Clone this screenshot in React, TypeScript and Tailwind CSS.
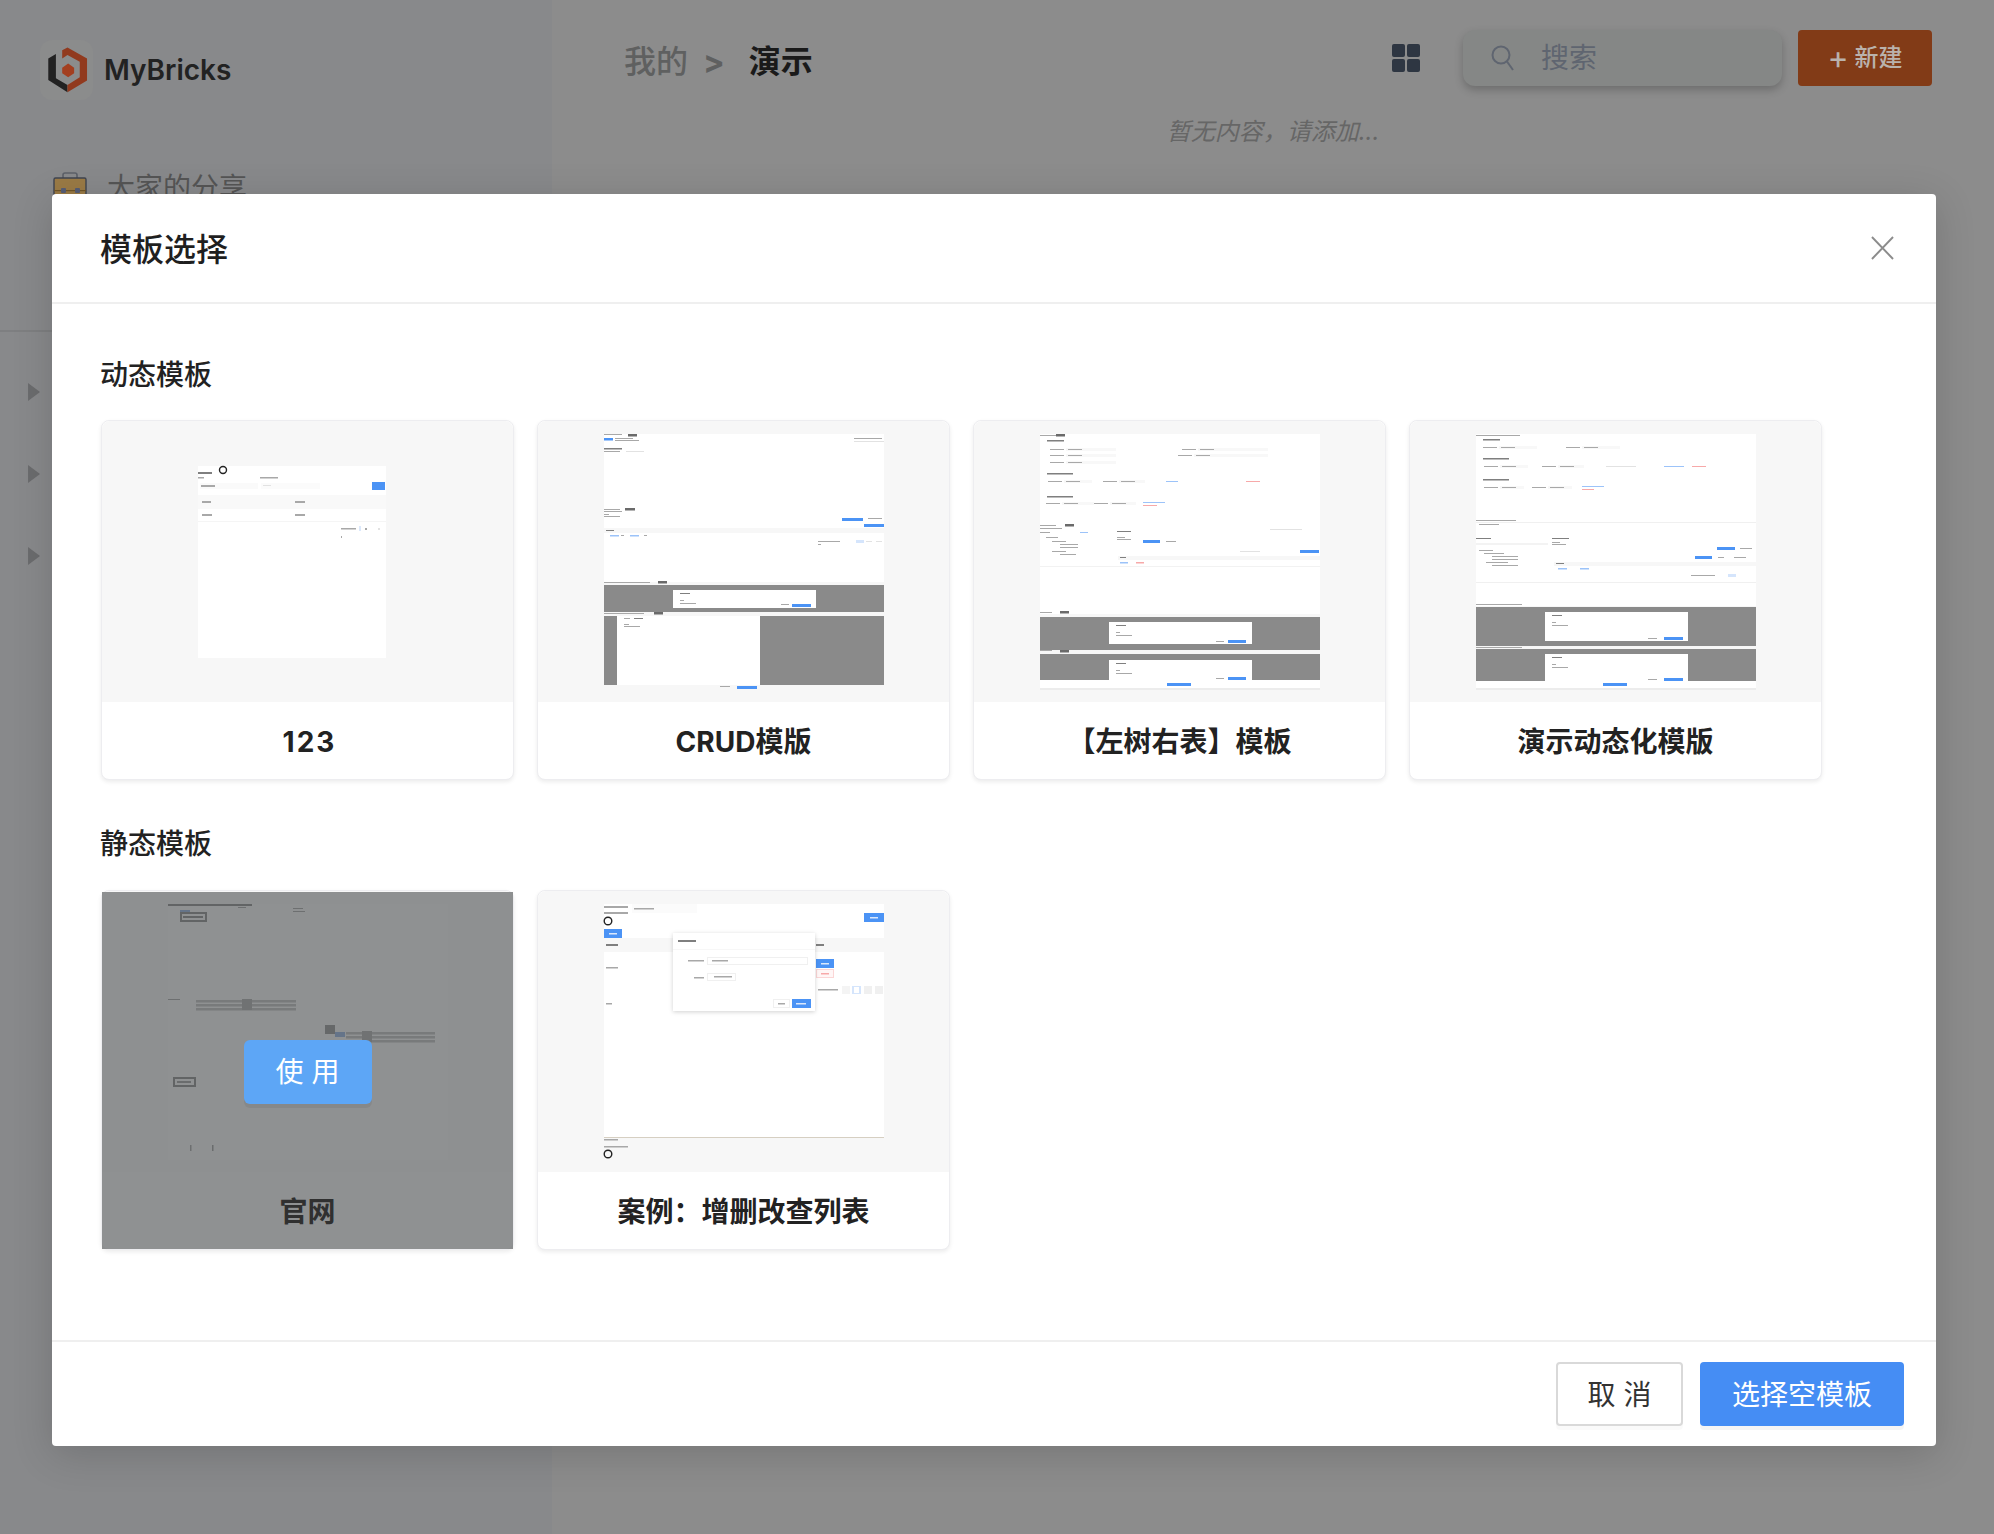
import React from "react";

type Box = [number, number, number, number, string];
type Ring = [number, number, number];

const BLUE = "#4c93f5";
const DARK = "#8a8a8a";
const TXT = "#a8a8a8";
const HEAD = "#7f7f7f";
const FAINT = "#e2e2e2";
const LINK = "#9cc3f9";
const RED = "#f7a9a9";
const BAND = "#f7f7f7";
const MARK = "#6a6a6a";

// mini form rows that repeat in the dynamic thumbnails
const field = (x: number, y: number, w: number): Box[] => [
  [x, y, 14, 1, TXT],
  [x + 16, y - 1, w, 3, "#f8f8f8"],
  [x + 18, y, 14, 1, TXT],
];

const dialog = (y: number, h: number): Box[] => [
  [69, y, 143, h, "#ffffff"],
  [76, y + 3, 10, 1, HEAD],
  [76, y + 10, 4, 1, TXT],
  [76, y + 13, 16, 1, TXT],
];

const crudBoxes: Box[] = [
  [0, 0, 18, 1, TXT],
  [24, 0, 9, 2.5, MARK],
  [0, 4, 9, 2.5, BLUE],
  [11, 4, 18, 1, TXT],
  [11, 6, 24, 1, TXT],
  [250, 4, 28, 1, TXT],
  [250, 7, 30, 1, FAINT],
  [0, 14, 18, 1.5, HEAD],
  [0, 17, 16, 1, TXT],
  [22, 17, 18, 1, FAINT],
  [0, 75, 16, 1, TXT],
  [21, 74, 10, 2.5, MARK],
  [0, 77, 18, 1, TXT],
  [0, 80, 5, 1, TXT],
  [0, 82, 16, 1, TXT],
  [238, 84, 21, 3, BLUE],
  [264, 84, 14, 1, TXT],
  [260, 90, 20, 3, BLUE],
  [0, 94, 280, 5, BAND],
  [2, 96, 8, 1, HEAD],
  [6, 101, 9, 1.5, LINK],
  [17, 101, 3, 1, TXT],
  [26, 101, 9, 1.5, LINK],
  [40, 101, 3, 1, TXT],
  [214, 107, 22, 1, TXT],
  [214, 110, 3, 1, TXT],
  [252, 106, 8, 3, "#d5e5fc"],
  [262, 107, 6, 1, FAINT],
  [272, 107, 6, 1, FAINT],
  [0, 148, 280, 3, BAND],
  [0, 148, 46, 1, TXT],
  [54, 147, 9, 2.5, MARK],
  [0, 151, 280, 27, DARK],
  ...dialog(156, 18),
  [177, 170, 8, 1, TXT],
  [188, 170, 19, 3, BLUE],
  [0, 178, 280, 4, BAND],
  [0, 179, 40, 1, TXT],
  [50, 178, 9, 2.5, MARK],
  [0, 182, 280, 69, DARK],
  [13, 182, 143, 69, "#ffffff"],
  [20, 184, 6, 1, TXT],
  [30, 184, 9, 1, HEAD],
  [20, 190, 5, 1, TXT],
  [20, 192, 16, 1, TXT],
  [0, 251, 280, 5, BAND],
  [116, 252, 10, 1, TXT],
  [133, 252, 20, 3, BLUE],
];

const treeBoxes: Box[] = [
  [0, 1, 18, 1, TXT],
  [16, 0, 9, 2.5, MARK],
  [7, 6, 17, 1.5, HEAD],
  ...field(10, 15, 50),
  ...field(142, 15, 70),
  ...field(10, 21, 50),
  ...field(138, 21, 74),
  ...field(10, 28, 50),
  [7, 39, 26, 1.5, HEAD],
  ...field(8, 47, 28),
  ...field(63, 47, 26),
  [126, 47, 12, 1, LINK],
  [206, 47, 14, 1, RED],
  [7, 62, 26, 1.5, HEAD],
  ...field(6, 69, 32),
  ...field(54, 69, 26),
  [103, 68, 22, 1, LINK],
  [103, 71, 14, 1, RED],
  [0, 91, 16, 1, TXT],
  [25, 90, 9, 2.5, MARK],
  [0, 94, 22, 1, TXT],
  [0, 98, 10, 1, TXT],
  [40, 98, 8, 1, LINK],
  [77, 97, 14, 1, HEAD],
  [77, 103, 8, 1, TXT],
  [77, 105, 14, 1, TXT],
  [103, 106, 17, 3, BLUE],
  [126, 107, 10, 1, TXT],
  [230, 95, 32, 1, FAINT],
  [6, 103, 12, 1, TXT],
  [12, 107, 14, 1, TXT],
  [20, 110, 18, 1, TXT],
  [20, 113, 18, 1, TXT],
  [12, 117, 14, 1, TXT],
  [20, 120, 16, 1, TXT],
  [200, 117, 20, 1, FAINT],
  [260, 116, 19, 3, BLUE],
  [78, 122, 202, 4, BAND],
  [80, 123, 6, 1, HEAD],
  [80, 128, 8, 1.5, LINK],
  [96, 128, 8, 1.5, RED],
  [0, 132, 280, 1, "#f2f2f2"],
  [0, 178, 12, 1, TXT],
  [20, 177, 9, 2.5, MARK],
  [0, 180, 280, 3, BAND],
  [0, 183, 280, 33, DARK],
  ...dialog(188, 22),
  [176, 207, 8, 1, TXT],
  [188, 206, 18, 3, BLUE],
  [0, 216, 280, 4, BAND],
  [0, 216, 12, 1, TXT],
  [20, 216, 9, 2.5, MARK],
  [0, 220, 280, 26, DARK],
  ...dialog(226, 20),
  [176, 244, 8, 1, TXT],
  [188, 243, 18, 3, BLUE],
  [127, 249, 24, 3, BLUE],
  [0, 254, 280, 2, "#ececec"],
];

const demoBoxes: Box[] = [
  [0, 1, 44, 1, TXT],
  [7, 5, 17, 1.5, HEAD],
  ...field(7, 13, 38),
  ...field(90, 13, 38),
  [7, 24, 26, 1.5, HEAD],
  ...field(8, 32, 28),
  ...field(66, 32, 26),
  [130, 32, 30, 1, FAINT],
  [188, 32, 20, 1, LINK],
  [216, 32, 14, 1, RED],
  [7, 45, 26, 1.5, HEAD],
  ...field(8, 53, 24),
  ...field(56, 53, 24),
  [106, 52, 22, 1, LINK],
  [106, 55, 12, 1, RED],
  [0, 86, 40, 1, TXT],
  [0, 88, 280, 1, "#f0f0f0"],
  [3, 90, 20, 1, TXT],
  [0, 104, 15, 1, HEAD],
  [76, 104, 17, 1, HEAD],
  [0, 109, 72, 2, "#f3f3f3"],
  [76, 108, 8, 1, TXT],
  [76, 110, 14, 1, TXT],
  [241, 113, 18, 3, BLUE],
  [264, 114, 12, 1, TXT],
  [3, 116, 14, 1, TXT],
  [8, 119, 20, 1, TXT],
  [16, 122, 26, 1, TXT],
  [16, 125, 26, 1, TXT],
  [10, 128, 22, 1, TXT],
  [16, 131, 26, 1, TXT],
  [219, 122, 17, 3, BLUE],
  [242, 123, 6, 1, TXT],
  [258, 123, 12, 1, TXT],
  [78, 128, 202, 4, BAND],
  [80, 129, 8, 1, HEAD],
  [82, 134, 9, 1.5, LINK],
  [104, 134, 9, 1.5, LINK],
  [215, 141, 24, 1, TXT],
  [252, 140, 8, 3, "#d5e5fc"],
  [0, 148, 280, 1, "#f0f0f0"],
  [0, 170, 46, 1, TXT],
  [0, 172, 280, 1, BAND],
  [0, 173, 280, 39, DARK],
  ...dialog(178, 29),
  [172, 204, 9, 1, TXT],
  [188, 203, 19, 3, BLUE],
  [0, 212, 280, 3, BAND],
  [0, 213, 46, 1, TXT],
  [0, 215, 280, 32, DARK],
  ...dialog(220, 27),
  [172, 245, 9, 1, TXT],
  [188, 244, 19, 3, BLUE],
  [127, 249, 24, 3, BLUE],
  [0, 254, 280, 2, "#ececec"],
];

const simpleBoxes: Box[] = [
  [0, 6, 14, 2, HEAD],
  [0, 11, 6, 1.5, TXT],
  [62, 11, 18, 1.5, TXT],
  [2, 17, 58, 6, "#fafafa"],
  [3, 19, 14, 2, TXT],
  [63, 17, 59, 6, "#fbfbfb"],
  [65, 19, 8, 1, FAINT],
  [174, 16, 13, 8, BLUE],
  [0, 29, 188, 14, "#f9f9f9"],
  [4, 35, 9, 2, TXT],
  [97, 35, 10, 2, TXT],
  [4, 48, 10, 2, TXT],
  [97, 48, 10, 2, TXT],
  [0, 55, 188, 1, "#f5f5f5"],
  [143, 62, 15, 1.5, TXT],
  [161, 60, 2, 5, "#dbe8fb"],
  [167, 62, 2, 2, TXT],
  [180, 62, 2, 2, FAINT],
  [143, 70, 1, 2, TXT],
];

const listBoxes: Box[] = [
  [0, 234, 280, 22, BAND],
  [0, 2, 24, 2, TXT],
  [0, 8, 24, 2, TXT],
  [28, 0, 65, 9, "#fbfbfb"],
  [30, 4, 20, 1.5, TXT],
  [260, 9, 20, 9, BLUE],
  [266, 13, 8, 1.5, "#dbe8fb"],
  [0, 25, 18, 9, BLUE],
  [5, 29, 8, 1.5, "#dbe8fb"],
  [0, 34, 280, 14, BAND],
  [2, 40, 12, 2, HEAD],
  [212, 40, 8, 2, HEAD],
  [2, 63, 12, 1.5, TXT],
  [212, 55, 18, 9, BLUE],
  [217, 59, 8, 1.5, "#dbe8fb"],
  [212, 65, 18, 9, "#fbd6d6"],
  [213, 66, 16, 7, "#fff6f6"],
  [217, 69, 8, 1.5, RED],
  [214, 85, 20, 1.5, TXT],
  [238, 82, 8, 8, "#f4f4f4"],
  [248, 82, 9, 8, "#d5e5fc"],
  [250, 83, 5, 6, "#ffffff"],
  [260, 82, 8, 8, "#f0f0f0"],
  [271, 82, 8, 8, "#f0f0f0"],
  [2, 99, 6, 1.5, TXT],
  [0, 233, 280, 1, "#d6cfc2"],
  [0, 235, 14, 1.5, TXT],
  [0, 242, 24, 1.5, TXT],
];

const listDialogBoxes: Box[] = [
  [69, 29, 142, 78, "#ffffff"],
  [74, 36, 18, 2, HEAD],
  [69, 45, 142, 0.5, "#eeeeee"],
  [84, 56, 16, 1.5, TXT],
  [103, 53, 101, 8, "#f0f0f0"],
  [104, 54, 99, 6, "#ffffff"],
  [108, 56, 16, 1.5, TXT],
  [90, 73, 10, 1.5, TXT],
  [103, 69, 29, 8, "#f0f0f0"],
  [104, 70, 27, 6, "#ffffff"],
  [110, 72, 18, 1.5, TXT],
  [169, 95, 17, 9, "#f0f0f0"],
  [170, 96, 15, 7, "#ffffff"],
  [174, 99, 7, 1.5, TXT],
  [188, 95, 19, 9, BLUE],
  [192, 99, 10, 1.5, "#dbe8fb"],
];

// drawn darker: this one sits under the strong hover layer
const siteBoxes: Box[] = [
  [0, 0, 84, 2, "#222222"],
  [12, 6, 10, 2, "#2f6fd0"],
  [12, 8, 27, 10, "#222222"],
  [14, 10, 23, 6, "#ffffff"],
  [15, 12, 20, 2, "#222222"],
  [70, 3, 8, 1, "#555555"],
  [125, 4, 10, 1, "#555555"],
  [125, 7, 12, 1, "#555555"],
  [0, 95, 12, 1, "#555555"],
  [28, 96, 100, 2.5, "#8a8a8a"],
  [28, 100, 100, 2.5, "#8a8a8a"],
  [28, 104, 100, 2.5, "#8a8a8a"],
  [74, 95, 10, 11, "#666666"],
  [157, 121, 10, 9, "#333333"],
  [167, 128, 10, 5, "#2f6fd0"],
  [178, 128, 89, 2.5, "#8a8a8a"],
  [178, 132, 89, 2.5, "#8a8a8a"],
  [178, 136, 89, 2.5, "#8a8a8a"],
  [194, 127, 10, 11, "#666666"],
  [5, 173, 23, 10, "#222222"],
  [7, 175, 19, 6, "#ffffff"],
  [9, 177, 14, 2, "#444444"],
  [22, 241, 1.5, 6, "#555555"],
  [44, 241, 1.5, 6, "#444444"],
];

function Thumb({
  x,
  y,
  w,
  h,
  boxes,
  rings = [],
  over = [],
}: {
  x: number;
  y: number;
  w: number;
  h: number;
  boxes: Box[];
  rings?: Ring[];
  over?: Box[];
}) {
  return (
    <svg viewBox="0 0 411 281" className="block h-[281px] w-[411px]">
      <defs>
        <filter id="soft" x="-5%" y="-5%" width="110%" height="110%">
          <feGaussianBlur stdDeviation="0.5" />
        </filter>
        <filter id="lift" x="-10%" y="-10%" width="120%" height="120%">
          <feDropShadow dx="0" dy="1" stdDeviation="2" floodOpacity="0.18" />
        </filter>
      </defs>
      <g transform={`translate(${x} ${y})`}>
        <rect width={w} height={h} fill="#ffffff" />
        <g filter="url(#soft)">
          {boxes.map(([bx, by, bw, bh, fill], i) => (
            <rect key={i} x={bx} y={by} width={bw} height={bh} fill={fill} />
          ))}
          {rings.map(([cx, cy, r], i) => (
            <circle key={i} cx={cx} cy={cy} r={r} fill="none" stroke="#222222" strokeWidth="1.4" />
          ))}
        </g>
        {over.length > 0 && (
          <g>
            <rect x={over[0][0]} y={over[0][1]} width={over[0][2]} height={over[0][3]} fill="#ffffff" filter="url(#lift)" />
            <g filter="url(#soft)">
              {over.slice(1).map(([bx, by, bw, bh, fill], i) => (
                <rect key={i} x={bx} y={by} width={bw} height={bh} fill={fill} />
              ))}
            </g>
          </g>
        )}
      </g>
    </svg>
  );
}

function TemplateCard({ title, hover, children }: { title: string; hover?: boolean; children: React.ReactNode }) {
  return (
    <div className="relative h-[360px] w-[413px] rounded-[8px] border border-[#ededf0] bg-white shadow-[0_2px_4px_rgba(0,0,0,0.08)]">
      <div className="h-[281px] overflow-hidden rounded-t-[8px] bg-[#f7f7f7]">{children}</div>
      <div
        className={`relative z-10 flex h-[77px] items-center justify-center pt-[2px] text-[28px] font-bold ${hover ? "font-semibold text-[#303030]" : "text-[#222222]"} ${title === "123" ? "pl-[4px] tracking-[2px]" : ""}`}
      >
        {title}
      </div>
      {hover && (
        <div className="absolute inset-x-0 bottom-0 top-[1px] flex items-center justify-center bg-[#737577]/80">
          <button className="mt-[2px] h-[64px] w-[128px] rounded-[6px] bg-[#5da6f6] text-[28px] text-white shadow-[0_4px_0_rgba(0,0,0,0.06)]">
            使 用
          </button>
        </div>
      )}
    </div>
  );
}

function Logo() {
  return (
    <svg viewBox="30 30 160 180" className="h-[60px] w-[53px] rounded-[12px] bg-[#8b8c8c]">
      <polygon points="55,85 78,72 78,145 113,165 113,187 55,150" fill="#222222" />
      <polygon points="97,60 113,52 172,85 172,152 113,187 113,165 150,142 150,95 113,75 97,85" fill="#913a1e" />
      <polygon points="97,113 115,100 133,113 133,130 115,142 97,130" fill="#a33f20" />
    </svg>
  );
}

function Briefcase() {
  return (
    <svg viewBox="0 0 34 34" className="h-[34px] w-[34px]">
      <path d="M10 8V4a2 2 0 0 1 2-2h10a2 2 0 0 1 2 2v4" fill="none" stroke="#5c6068" strokeWidth="1.6" />
      <rect x="1" y="7" width="32" height="27" rx="1.5" fill="#9a7a45" stroke="#3f4450" strokeWidth="1.4" />
      <rect x="1" y="19" width="32" height="1.2" fill="#6f5528" />
      <rect x="8" y="17" width="5" height="5" rx="1" fill="#565d75" />
      <rect x="22" y="17" width="5" height="5" rx="1" fill="#565d75" />
    </svg>
  );
}

function Caret() {
  return (
    <svg viewBox="0 0 12 18" className="h-[18px] w-[12px]">
      <polygon points="0,0 12,9 0,18" fill="#6b6c6e" />
    </svg>
  );
}

function GridIcon() {
  return (
    <svg viewBox="0 0 28 28" className="h-[28px] w-[28px]">
      <rect width="13" height="13" rx="2" fill="#2e3642" />
      <rect x="15" width="13" height="13" rx="2" fill="#2e3642" />
      <rect y="15" width="13" height="13" rx="2" fill="#2e3642" />
      <rect x="15" y="15" width="13" height="13" rx="2" fill="#2e3642" />
    </svg>
  );
}

function SearchIcon() {
  return (
    <svg viewBox="0 0 24 26" className="h-[26px] w-[24px]" fill="none" stroke="#5f6570" strokeWidth="2">
      <ellipse cx="10" cy="10" rx="8.5" ry="8.5" />
      <path d="M16 16.5L22 25" />
    </svg>
  );
}

// faint user stamp that runs over the whole page and off its edges
function Watermark() {
  const cols = [-280, 60, 400, 740, 1080, 1420, 1760];
  const rows = Array.from({ length: 22 }, (_, i) => -127 + i * 80);
  return (
    <svg className="pointer-events-none absolute inset-0 z-20 h-[1534px] w-[1994px]" fontFamily="Liberation Sans, sans-serif" fontSize="26" fill="#000000" fillOpacity="0.024">
      {cols.map((x) =>
        rows.map((y) => (
          <g key={`${x}-${y}`}>
            <text transform={`translate(${x} ${y}) rotate(45)`}>2024/03/29 15:20:20</text>
            <text transform={`translate(${x + 22} ${y + 50}) rotate(45)`}>zhaoxing903 -</text>
          </g>
        ))
      )}
    </svg>
  );
}

export default function App() {
  return (
    <div className="relative flex h-[1534px] w-[1994px] overflow-hidden bg-[#8c8c8c] font-[Inter,'Noto_Sans_CJK_SC',sans-serif]">
      {/* Page behind the dialog */}
      <aside className="w-[552px] shrink-0 bg-[#88898b]">
        <div className="flex items-center gap-[11px] pl-[40px] pt-[40px]">
          <Logo />
          <span className="text-[28px] font-semibold leading-[60px] text-[#222222]">MyBricks</span>
        </div>
        <div className="mt-[71px] flex items-center gap-[20px] pl-[53px]">
          <Briefcase />
          <span className="text-[28px] leading-[34px] text-[#555555]">大家的分享</span>
        </div>
        <div className="mt-[125px] h-[2px] bg-[#7e7f81]" />
        <div className="mt-[51px] flex flex-col gap-[64px] pl-[28px]">
          <Caret />
          <Caret />
          <Caret />
        </div>
      </aside>

      <main className="flex-1">
        <header className="flex items-center pl-[72px] pr-[62px] pt-[30px]">
          <div className="mr-auto mt-[8px] flex items-center text-[32px] leading-[44px]">
            <span className="font-medium text-[#5f6060]">我的</span>
            <span className="ml-[15px] font-bold text-[#5f6060]">&gt;</span>
            <span className="ml-[24px] font-semibold text-[#1a1a1a]">演示</span>
          </div>
          <GridIcon />
          <div className="ml-[43px] flex h-[56px] w-[319px] items-center gap-[26px] rounded-[12px] bg-[#858786] pl-[28px] shadow-[0_4px_8px_rgba(0,0,0,0.22)]">
            <SearchIcon />
            <span className="text-[28px] text-[#5f6570]">搜索</span>
          </div>
          <button className="ml-[16px] flex h-[56px] w-[134px] items-center justify-center gap-[6px] rounded-[4px] bg-[#823b17] text-[24px] font-medium text-[#bab2ac]">
            <span className="text-[32px] font-normal leading-none">+</span>
            <span>新建</span>
          </button>
        </header>
        <p className="mt-[30px] text-center text-[24px] italic leading-[32px] text-[#666666]">暂无内容，请添加...</p>
      </main>

      {/* Template picker */}
      <div className="absolute left-[52px] top-[194px] z-10 flex h-[1252px] w-[1884px] flex-col rounded-[4px] bg-white shadow-[0_8px_40px_rgba(0,0,0,0.16)]">
        <div className="flex h-[110px] shrink-0 items-center justify-between border-b-2 border-[#efefef] pl-[48px] pr-[42px]">
          <h2 className="pt-[3px] text-[32px] font-medium text-[#1f1f1f]">模板选择</h2>
          <svg viewBox="0 0 24 24" className="h-[24px] w-[23px]" fill="none" stroke="#8c8c8c" strokeWidth="2" preserveAspectRatio="none">
            <path d="M1 1l22 22M23 1L1 23" />
          </svg>
        </div>

        <div className="flex-1 pl-[49px] pr-[48px] pt-[51px]">
          <h3 className="-ml-[1px] mb-[25px] text-[28px] font-medium leading-[40px] text-[#222222]">动态模板</h3>
          <div className="grid grid-cols-[repeat(4,413px)] gap-x-[23px]">
            <TemplateCard title="123">
              <Thumb x={96} y={45} w={188} h={192} boxes={simpleBoxes} rings={[[25, 4, 3.5]]} />
            </TemplateCard>
            <TemplateCard title="CRUD模版">
              <Thumb x={66} y={13} w={280} h={256} boxes={crudBoxes} />
            </TemplateCard>
            <TemplateCard title="【左树右表】模板">
              <Thumb x={66} y={13} w={280} h={256} boxes={treeBoxes} />
            </TemplateCard>
            <TemplateCard title="演示动态化模版">
              <Thumb x={66} y={13} w={280} h={256} boxes={demoBoxes} />
            </TemplateCard>
          </div>

          <h3 className="-ml-[1px] mb-[26px] mt-[44px] text-[28px] font-medium leading-[40px] text-[#222222]">静态模板</h3>
          <div className="grid grid-cols-[repeat(4,413px)] gap-x-[23px]">
            <TemplateCard title="官网" hover>
              <Thumb x={66} y={13} w={280} h={256} boxes={siteBoxes} />
            </TemplateCard>
            <TemplateCard title="案例：增删改查列表">
              <Thumb x={66} y={13} w={280} h={256} boxes={listBoxes} rings={[[4, 17, 3.8], [4, 250, 3.8]]} over={listDialogBoxes} />
            </TemplateCard>
          </div>
        </div>

        <div className="flex h-[106px] shrink-0 items-center justify-end gap-[17px] border-t-2 border-[#efefef] pr-[32px]">
          <button className="h-[64px] w-[127px] rounded-[4px] border-2 border-[#d9d9d9] bg-white pt-[2px] text-[28px] text-[#333333] shadow-[0_4px_0_rgba(0,0,0,0.02)]">
            取 消
          </button>
          <button className="h-[64px] w-[204px] rounded-[4px] bg-[#458df4] pt-[2px] text-[28px] text-white shadow-[0_4px_0_rgba(0,0,0,0.04)]">
            选择空模板
          </button>
        </div>
      </div>

      <Watermark />
    </div>
  );
}
